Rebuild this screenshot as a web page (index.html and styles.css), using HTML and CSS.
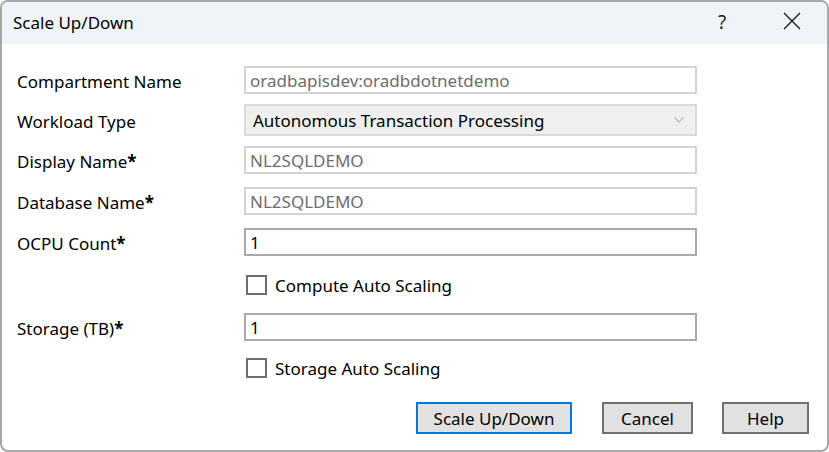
FILE: index.html
```html
<!DOCTYPE html>
<html lang="en">
<head>
<meta charset="UTF-8">
<meta name="viewport" content="width=device-width, initial-scale=1.0">
<title>Scale Up/Down</title>
<link rel="stylesheet" href="styles.css">
</head>
<body>

<div class="dialog">
    <div class="titlebar">
        <div class="title">Scale Up/Down</div>
        <div class="help-btn">?</div>
        <div class="close-btn">
            <svg width="18" height="18" viewBox="0 0 18 18">
                <path d="M1 1 L17 17 M17 1 L1 17" stroke="#1a1a1a" stroke-width="1.4" fill="none"/>
            </svg>
        </div>
    </div>

    <div class="form">
        <div class="row">
            <label class="label">Compartment Name</label>
            <input class="field disabled" type="text" value="oradbapisdev:oradbdotnetdemo" readonly>
        </div>
        <div class="row row-select">
            <label class="label">Workload Type</label>
            <div class="select">
                <span>Autonomous Transaction Processing</span>
                <svg width="12" height="8" viewBox="0 0 12 8">
                    <path d="M1.5 1.5 L6 6 L10.5 1.5" stroke="#bdbdbd" stroke-width="1.4" fill="none"/>
                </svg>
            </div>
        </div>
        <div class="row row-display">
            <label class="label">Display Name<b>*</b></label>
            <input class="field disabled" type="text" value="NL2SQLDEMO" readonly>
        </div>
        <div class="row row-wide">
            <label class="label">Database Name<b>*</b></label>
            <input class="field disabled" type="text" value="NL2SQLDEMO" readonly>
        </div>
        <div class="row row-wide">
            <label class="label">OCPU Count<b>*</b></label>
            <input class="field" type="text" value="1">
        </div>
        <div class="row check-row check-compute">
            <span class="check"></span>
            <span class="check-label">Compute Auto Scaling</span>
        </div>
        <div class="row row-storage">
            <label class="label">Storage (TB)<b>*</b></label>
            <input class="field" type="text" value="1">
        </div>
        <div class="row check-row check-storage">
            <span class="check"></span>
            <span class="check-label">Storage Auto Scaling</span>
        </div>

        <div class="buttons">
            <button class="btn btn-primary">Scale Up/Down</button>
            <button class="btn btn-cancel">Cancel</button>
            <button class="btn btn-help">Help</button>
        </div>
    </div>
</div>

</body>
</html>
```

FILE: styles.css
```css
* {
    box-sizing: border-box;
    margin: 0;
    padding: 0;
}

body {
    background: #ffffff;
    font-family: "Noto Sans", "Open Sans", sans-serif;
    font-size: 17px;
    color: #000;
}

.dialog {
    width: 829px;
    height: 452px;
    border: 2px solid #a7a7a7;
    border-radius: 8px;
    overflow: hidden;
    background: #fff;
}

.titlebar {
    height: 42px;
    background: #eff4f9;
    display: flex;
    align-items: center;
    padding-left: 11px;
}

.title {
    flex: 1;
    font-size: 17px;
    padding-bottom: 2px;
}

.help-btn {
    width: 20px;
    font-size: 19px;
    color: #222;
    margin-right: 45px;
    padding-bottom: 2px;
}

.close-btn {
    width: 18px;
    height: 18px;
    margin-right: 26px;
    margin-bottom: 4px;
}

.form {
    padding: 22px 0 0 15px;
}

.row {
    display: flex;
    align-items: center;
    height: 28px;
}

.row-select {
    height: 32px;
    margin-top: 10px;
}

.row-display {
    margin-top: 10px;
}

.row-wide {
    margin-top: 13px;
}

.label {
    width: 227px;
    font-size: 17px;
    padding-top: 2px;
}

.label b {
    font-weight: 700;
}

.field {
    width: 453px;
    height: 28px;
    border: 2px solid #a9a9a9;
    padding: 0 4px;
    font-family: inherit;
    font-size: 17px;
    color: #000;
    outline: none;
    background: #fff;
}

.field.disabled {
    border-color: #d2d2d2;
    color: #6d6d6d;
}

.select {
    width: 453px;
    height: 32px;
    border: 2px solid #dadada;
    background: #efefef;
    display: flex;
    align-items: center;
    justify-content: space-between;
    padding: 0 10px 0 7px;
}

.check-row {
    height: 20px;
    padding-left: 229px;
}

.check-compute {
    margin-top: 19px;
}

.row-storage {
    margin-top: 18px;
}

.check-storage {
    margin-top: 17px;
}

.check {
    width: 21px;
    height: 20px;
    border: 2px solid #6d6d6d;
    background: #fff;
    margin-right: 8px;
}

.buttons {
    display: flex;
    margin-top: 24px;
    padding-left: 399px;
}

.btn {
    height: 32px;
    background: #e1e1e1;
    border: 2px solid #707070;
    font-family: inherit;
    font-size: 17px;
    color: #000;
}

.btn-primary {
    width: 156px;
    border-color: #0078d7;
}

.btn-cancel {
    width: 91px;
    margin-left: 30px;
}

.btn-help {
    width: 87px;
    margin-left: 29px;
}
```
